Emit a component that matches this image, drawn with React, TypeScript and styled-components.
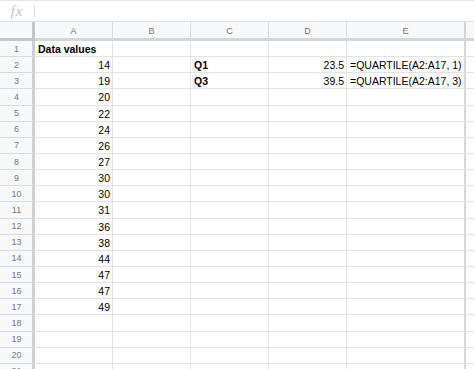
import React from "react";
import styled, { createGlobalStyle } from "styled-components";

const GlobalStyle = createGlobalStyle`
  html, body {
    margin: 0;
    padding: 0;
    background: #ffffff;
    overflow: hidden;
  }
  body {
    font-family: "Liberation Sans", Arial, sans-serif;
  }
`;

const COLS = [
  { label: "A", width: 78 },
  { label: "B", width: 78 },
  { label: "C", width: 78 },
  { label: "D", width: 78 },
  { label: "E", width: 119 },
  { label: "", width: 40 },
];

type CellValue = { text: string; bold?: boolean; align?: "left" | "right" };

const DATA: Record<number, Record<string, CellValue>> = {
  1: { A: { text: "Data values", bold: true } },
  2: {
    C: { text: "Q1", bold: true },
    D: { text: "23.5", align: "right" },
    E: { text: "=QUARTILE(A2:A17, 1)" },
  },
  3: {
    C: { text: "Q3", bold: true },
    D: { text: "39.5", align: "right" },
    E: { text: "=QUARTILE(A2:A17, 3)" },
  },
};

const values = [14, 19, 20, 22, 24, 26, 27, 30, 30, 31, 36, 38, 44, 47, 47, 49];
values.forEach((v, i) => {
  const row = i + 2;
  DATA[row] = { ...(DATA[row] || {}), A: { text: String(v), align: "right" } };
});

const Page = styled.div`
  width: 474px;
  height: 369px;
  overflow: hidden;
  display: flex;
  flex-direction: column;
`;

const FormulaBar = styled.div`
  height: 20px;
  border-top: 1px solid #e8e8e8;
  border-bottom: 1px solid #e0e0e0;
  display: flex;
  align-items: center;
  flex-shrink: 0;
`;

const FxLabel = styled.span`
  width: 34px;
  text-align: center;
  font-family: "Liberation Serif", "DejaVu Serif", serif;
  font-style: italic;
  font-size: 15px;
  color: #c4c4c4;
  letter-spacing: 1px;
  line-height: 20px;
`;

const Divider = styled.span`
  width: 1px;
  height: 11px;
  background: #d8d8d8;
`;

const Grid = styled.div`
  display: grid;
  width: max-content;
  grid-template-columns: 35px ${COLS.map((c) => `${c.width}px`).join(" ")};
  grid-template-rows: 19px;
  grid-auto-rows: 16.15px;
`;

const Corner = styled.div`
  background: #f8f9fa;
  border-right: 3px solid #c4c7c5;
  border-bottom: 3px solid #c4c7c5;
  box-sizing: border-box;
`;

const ColHeader = styled.div<{ $last?: boolean }>`
  background: #f8f9fa;
  box-sizing: border-box;
  border-right: ${(p) => (p.$last ? "2px solid #d3d3d3" : "1px solid #dadcdc")};
  border-bottom: 3px solid #d5d7d7;
  color: #777;
  font-size: 9px;
  display: flex;
  align-items: center;
  justify-content: center;
  padding-top: 1px;
`;

const RowHeader = styled.div`
  background: #f8f9fa;
  box-sizing: border-box;
  border-right: 3px solid #cfd1d1;
  border-bottom: 1px solid #dadcdc;
  color: #777;
  font-size: 9px;
  display: flex;
  align-items: center;
  justify-content: center;
  padding-left: 1px;
`;

const Cell = styled.div<{ $bold?: boolean; $align?: "left" | "right"; $last?: boolean }>`
  box-sizing: border-box;
  border-right: ${(p) => (p.$last ? "2px solid #d8d8d8" : "1px solid #e2e3e3")};
  border-bottom: 1px solid #e2e3e3;
  font-size: 10.5px;
  font-weight: ${(p) => (p.$bold ? 700 : 400)};
  color: #000;
  text-align: ${(p) => p.$align || "left"};
  padding: 0 2px 0 3px;
  line-height: 16px;
  white-space: nowrap;
  overflow: visible;
`;

export default function App() {
  const rows = Array.from({ length: 21 }, (_, i) => i + 1);
  return (
    <Page>
      <GlobalStyle />
      <FormulaBar>
        <FxLabel>fx</FxLabel>
        <Divider />
      </FormulaBar>
      <Grid>
        <Corner />
        {COLS.map((c, i) => (
          <ColHeader key={c.label + i} $last={i === 4}>
            {c.label}
          </ColHeader>
        ))}
        {rows.map((r) => (
          <React.Fragment key={r}>
            <RowHeader>{r}</RowHeader>
            {COLS.map((c, i) => {
              const v = DATA[r]?.[c.label];
              return (
                <Cell key={c.label + i} $bold={v?.bold} $align={v?.align} $last={i === 4}>
                  {v?.text}
                </Cell>
              );
            })}
          </React.Fragment>
        ))}
      </Grid>
    </Page>
  );
}
